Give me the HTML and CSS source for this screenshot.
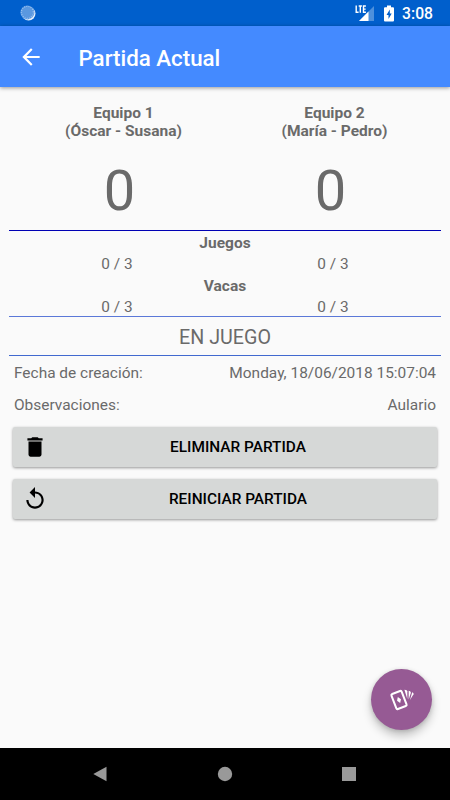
FILE: index.html
```html
<!DOCTYPE html>
<html lang="es">
<head>
    <meta charset="UTF-8">
    <meta name="viewport" content="width=device-width, initial-scale=1.0">
    <title>Partida Actual</title>
    <link rel="stylesheet" href="styles.css">
</head>
<body>
    <div class="status-bar">
        <svg class="sync" width="16" height="16" viewBox="0 0 16 16">
            <circle cx="8.600" cy="8.600" r="6.900" fill="#e3eefb"/>
            <circle cx="7.400" cy="7.400" r="7" fill="#5a98e0"/>
            <circle cx="7.400" cy="7.400" r="6" fill="none" stroke="#9cc3f0" stroke-width="1.200" stroke-dasharray="1 1.200"/>
        </svg>
        <div class="status-icons">
            <svg class="signal" width="20" height="17" viewBox="0 0 20 17">
                <path d="M19 1v15H4z" fill="#4d90dc"/>
                <path d="M13.500 6.500V16H4z" fill="#fff"/>
                <path d="M1.200.500v6.800h2.400M3.700 1h3.200M5.300 1v6.800M10.900 1H8.500v6.300h2.400M8.500 4.100h2.200" fill="none" stroke="#fff" stroke-width="1.400"/>
            </svg>
            <svg class="battery" width="10" height="17" viewBox="0 0 10 17">
                <path d="M3 .5h4v1.800h2q1 0 1 1v12.200q0 1-1 1H1q-1 0-1-1V3.300q0-1 1-1h2z" fill="#fff"/>
                <path d="M5.800 4.500L2.500 10h2v4l3.200-5.500h-1.900z" fill="#005fcc"/>
            </svg>
            <span class="clock">3:08</span>
        </div>
    </div>

    <header class="app-bar">
        <svg class="back" width="26" height="26" viewBox="0 0 24 24">
            <path d="M20 11H7.830l5.590-5.590L12 4l-8 8 8 8 1.410-1.410L7.830 13H20v-2z" fill="#fff"/>
        </svg>
        <h1>Partida Actual</h1>
    </header>

    <main class="content">
        <div class="row teams">
            <div>Equipo 1<br>(Óscar - Susana)</div>
            <div>Equipo 2<br>(María - Pedro)</div>
        </div>
        <div class="row points">
            <div>0</div>
            <div>0</div>
        </div>

        <section class="score">
            <h2>Juegos</h2>
            <div class="row">
                <div>0 / 3</div>
                <div>0 / 3</div>
            </div>
            <h2>Vacas</h2>
            <div class="row">
                <div>0 / 3</div>
                <div>0 / 3</div>
            </div>
        </section>

        <div class="state">EN JUEGO</div>

        <div class="info">
            <span>Fecha de creación:</span>
            <span>Monday, 18/06/2018 15:07:04</span>
        </div>
        <div class="info">
            <span>Observaciones:</span>
            <span>Aulario</span>
        </div>

        <button class="btn">
            <svg width="26" height="26" viewBox="0 0 24 24">
                <path d="M6 19c0 1.100.9 2 2 2h8c1.100 0 2-.9 2-2V7H6v12zM19 4h-3.500l-1-1h-5l-1 1H5v2h14V4z"/>
            </svg>
            <span>ELIMINAR PARTIDA</span>
        </button>
        <button class="btn">
            <svg width="26" height="26" viewBox="0 0 24 24">
                <path d="M12 5V1L7 6l5 5V7c3.310 0 6 2.690 6 6s-2.690 6-6 6-6-2.690-6-6H4c0 4.420 3.580 8 8 8s8-3.580 8-8-3.580-8-8-8z"/>
            </svg>
            <span>REINICIAR PARTIDA</span>
        </button>
    </main>

    <button class="fab">
        <svg width="26" height="24" viewBox="0 0 26 24">
            <g transform="rotate(-21 10 12)">
                <rect x="4.500" y="4" width="11" height="16" rx="1.300" fill="none" stroke="#fff" stroke-width="2"/>
                <path d="M10 8.700l2.100 3.300-2.100 3.300-2.100-3.300z" fill="#fff"/>
            </g>
            <path d="M15.400 1.800l1.500.1q1.400.1 1.400 1.400v7.700z" fill="#fff"/>
            <path d="M19.700 2.700l1.300.6q1.100.600.800 1.600l-2.100 6.600z" fill="#fff"/>
            <path d="M23.200 4.200l.8.500q.9.600.5 1.500l-3.500 5.800z" fill="#fff"/>
        </svg>
    </button>

    <nav class="nav-bar">
        <svg width="16" height="16" viewBox="0 0 16 16"><path d="M14.500.8v14.400L1.300 8z"/></svg>
        <svg width="16" height="16" viewBox="0 0 16 16"><circle cx="8" cy="8" r="7.200"/></svg>
        <svg width="16" height="16" viewBox="0 0 16 16"><rect x="1" y="1" width="14" height="14"/></svg>
    </nav>
</body>
</html>
```
FILE: styles.css
```css
* {
    margin: 0;
    padding: 0;
    box-sizing: border-box;
    font-family: Roboto, sans-serif;
}

body {
    display: flex;
    flex-direction: column;
    height: 100vh;
    overflow: hidden;
    background-color: #fafafa;
    color: #6a6a6a;
    font-size: 15.4px;
    line-height: 18px;
}

svg {
    display: block;
    flex: none;
}

.status-bar {
    display: flex;
    justify-content: space-between;
    align-items: center;
    height: 26px;
    padding: 0 17px 0 20px;
    background-color: #005fcc;
    color: #fff;
}

.status-icons {
    display: flex;
    align-items: center;
}

.battery {
    margin: 0 8px 0 9px;
}

.clock {
    font-size: 15.7px;
    font-weight: 500;
    line-height: 26px;
    padding-top: 1px;
}

.app-bar {
    display: flex;
    align-items: center;
    height: 61px;
    padding-left: 18px;
    background-color: #448aff;
    color: #fff;
    box-shadow: 0 1px 4px rgba(0, 0, 0, 0.4);
}

.app-bar h1 {
    margin-left: 34.5px;
    font-size: 22.3px;
    font-weight: 500;
    line-height: 26px;
    padding-top: 2px;
}

.content {
    flex: 1;
    padding: 17px 9px 0;
}

.row {
    display: grid;
    grid-template-columns: 1fr 1fr;
    text-align: center;
}

.teams {
    padding: 0 1px 0 9px;
    font-size: 15.5px;
    font-weight: 700;
}

.points {
    height: 90px;
    padding: 0 5px;
    font-size: 56px;
    line-height: 102px;
}

.score {
    padding-top: 2px;
    border-top: 1px solid #0000b4;
    border-bottom: 1px solid #5b78d8;
    height: 87px;
}

.score h2 {
    font-size: 15.5px;
    line-height: 20px;
    text-align: center;
}

.score .row {
    line-height: 22.5px;
}

.state {
    height: 39px;
    border-bottom: 1px solid #4169cf;
    font-size: 19.7px;
    line-height: 41px;
    text-align: center;
}

.info {
    display: flex;
    justify-content: space-between;
    padding: 0 5px;
    height: 32px;
    font-size: 15.45px;
    line-height: 35px;
}

.btn {
    display: flex;
    align-items: center;
    width: 424px;
    height: 40px;
    margin: 7px 4px 12px;
    padding: 0 9px;
    border: none;
    border-radius: 2px;
    background-color: #d6d8d7;
    color: #000;
    font-size: 15.4px;
    font-weight: 500;
    box-shadow: 0 1px 3px rgba(0, 0, 0, 0.4);
}

.btn span {
    flex: 1;
}

.fab {
    position: absolute;
    right: 18px;
    bottom: 70px;
    display: flex;
    justify-content: center;
    align-items: center;
    width: 61px;
    height: 61px;
    border: none;
    border-radius: 50%;
    background-color: #965a94;
    box-shadow: 0 6px 10px rgba(0, 0, 0, 0.22), 0 1px 4px rgba(0, 0, 0, 0.15);
}

.nav-bar {
    display: flex;
    justify-content: space-between;
    align-items: center;
    height: 52px;
    padding: 0 93px 0 92px;
    background-color: #000;
    fill: #999;
}
```
